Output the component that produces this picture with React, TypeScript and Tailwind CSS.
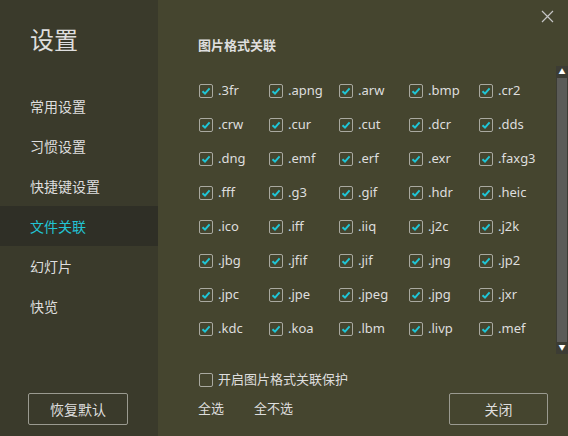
const exts = [
  ['.3fr', '.apng', '.arw', '.bmp', '.cr2'],
  ['.crw', '.cur', '.cut', '.dcr', '.dds'],
  ['.dng', '.emf', '.erf', '.exr', '.faxg3'],
  ['.fff', '.g3', '.gif', '.hdr', '.heic'],
  ['.ico', '.iff', '.iiq', '.j2c', '.j2k'],
  ['.jbg', '.jfif', '.jif', '.jng', '.jp2'],
  ['.jpc', '.jpe', '.jpeg', '.jpg', '.jxr'],
  ['.kdc', '.koa', '.lbm', '.livp', '.mef'],
]

const menu = ['常用设置', '习惯设置', '快捷键设置', '文件关联', '幻灯片', '快览']

function Box({ checked }: { checked: boolean }) {
  return (
    <span className="w-[14px] h-[14px] border border-[#a9a9a0] rounded-[2px] flex items-center justify-center shrink-0">
      {checked && (
        <svg width="10" height="10" viewBox="0 0 10 10">
          <path d="M1.5 5.2 L4 7.6 L8.6 2.4" stroke="#1fc6d6" strokeWidth="2" fill="none" />
        </svg>
      )}
    </span>
  )
}

export default function App() {
  return (
    <div
      className="flex w-[568px] h-[436px] text-[#dedede] overflow-hidden"
      style={{ fontFamily: '"Noto Sans", "Noto Sans CJK SC", sans-serif' }}
    >
      {/* Sidebar */}
      <aside className="w-[158px] bg-[#3a3a2b] flex flex-col">
        <h1 className="text-[24px] leading-none pl-[30px] pt-[28px] h-[86px]">设置</h1>
        <nav className="flex flex-col">
          {menu.map(m => (
            <div
              key={m}
              className={`h-[40px] flex items-center pl-[30px] text-[14px] ${
                m === '文件关联' ? 'bg-[#2f2f26] text-[#22c4d4]' : ''
              }`}
            >
              {m}
            </div>
          ))}
        </nav>
        <div className="mt-auto pl-[28px] pb-[11px]">
          <button className="w-[100px] h-[32px] border border-[#9a9a90] rounded-[2px] text-[14px]">
            恢复默认
          </button>
        </div>
      </aside>

      {/* Main */}
      <main className="flex-1 bg-[#45452f] relative flex flex-col">
        <button className="absolute right-[14px] top-[10px] text-[#c8c8c8]">
          <svg width="13" height="13" viewBox="0 0 13 13">
            <path d="M1 1 L12 12 M12 1 L1 12" stroke="#c4c4c4" strokeWidth="1.2" />
          </svg>
        </button>
        <h2 className="pl-[40px] pt-[37px] text-[13px] font-bold leading-[16px] h-[66px]">图片格式关联</h2>
        <div className="flex h-[288px]">
          <div className="flex-1 overflow-hidden pl-[41px] pt-[8px]">
            {exts.map((row, i) => (
              <div key={i} className="flex h-[34px] items-center">
                {row.map(e => (
                  <label key={e} className="w-[70px] flex items-center gap-[5px] text-[13px]">
                    <Box checked />
                    <span>{e}</span>
                  </label>
                ))}
              </div>
            ))}
          </div>
          <div className="w-[12px] bg-[#3c3c34] flex flex-col items-center">
            <span className="text-[7px] leading-[12px] text-white">▲</span>
            <div className="flex-1 w-[10px] bg-[#5b5b58]" />
            <span className="text-[7px] leading-[12px] text-white">▼</span>
          </div>
        </div>
        <label className="pl-[41px] mt-[16px] flex items-center gap-[5px] text-[13px]">
          <Box checked={false} />
          <span>开启图片格式关联保护</span>
        </label>
        <div className="mt-auto flex items-center pl-[40px] pr-[20px] pb-[11px]">
          <span className="text-[13px]">全选</span>
          <span className="text-[13px] ml-[30px]">全不选</span>
          <button className="ml-auto w-[99px] h-[32px] border border-[#9a9a90] rounded-[2px] text-[14px]">
            关闭
          </button>
        </div>
      </main>
    </div>
  )
}
